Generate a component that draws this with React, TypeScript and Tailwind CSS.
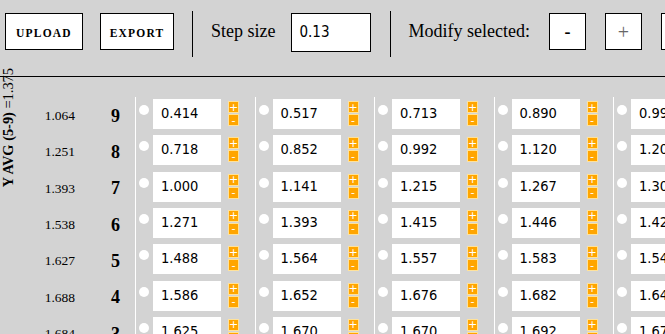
const avgs = ["1.064", "1.251", "1.393", "1.538", "1.627", "1.688", "1.684"];
const rowNums = [9, 8, 7, 6, 5, 4, 3];

const columns = [
  ["0.414", "0.718", "1.000", "1.271", "1.488", "1.586", "1.625"],
  ["0.517", "0.852", "1.141", "1.393", "1.564", "1.652", "1.670"],
  ["0.713", "0.992", "1.215", "1.415", "1.557", "1.676", "1.670"],
  ["0.890", "1.120", "1.267", "1.446", "1.583", "1.682", "1.692"],
  ["0.995", "1.204", "1.302", "1.427", "1.545", "1.648", "1.675"],
];

const serif = "font-['Liberation_Serif',serif]";
const sans = "font-['DejaVu_Sans_Condensed','DejaVu_Sans',sans-serif] [font-stretch:condensed]";

function Cell({ value }: { value: string }) {
  return (
    <div className="flex items-start h-[36.33px] pt-[2px]">
      <div className="ml-[3px] mt-[6px] w-[10px] h-[10px] rounded-full bg-white" />
      <div className={`ml-[4px] w-[68px] h-[30px] bg-white flex items-center pl-[8px] text-[14.5px] text-black ${sans}`}>
        {value}
      </div>
      <div className="ml-[7px] mt-[2px] flex flex-col gap-[1px]">
        <div className="w-[11px] h-[12px] bg-[#ffa500] border border-[#ffe29a] flex items-center justify-center text-white text-[11px] leading-none font-['DejaVu_Sans',sans-serif]">
          +
        </div>
        <div className="w-[11px] h-[12px] bg-[#ffa500] border border-[#ffe29a] flex items-center justify-center text-white text-[11px] leading-none font-['DejaVu_Sans',sans-serif]">
          -
        </div>
      </div>
    </div>
  );
}

export default function App() {
  return (
    <div className={`w-screen h-screen overflow-hidden bg-[#d3d3d3] text-black ${serif}`}>
      {/* Toolbar */}
      <div className="h-[77px] border-b border-black flex items-start pt-[11px] whitespace-nowrap">
        <button className="ml-[5px] mt-[2px] w-[78px] h-[37px] pt-[4px] shrink-0 bg-white border border-black text-[11.5px] font-bold tracking-[1.2px]">
          UPLOAD
        </button>
        <button className="ml-[17px] mt-[2px] w-[74px] h-[37px] pt-[4px] shrink-0 bg-white border border-black text-[11.5px] font-bold tracking-[1.2px]">
          EXPORT
        </button>
        <div className="ml-[18px] w-px h-[46px] shrink-0 bg-black" />
        <span className="ml-[18px] mt-[2px] h-[37px] leading-[37px] text-[18px] shrink-0">Step size</span>
        <div className={`ml-[15px] mt-[2px] w-[80px] h-[39px] shrink-0 bg-white border border-black flex items-center pl-[8px] text-[15px] ${sans}`}>
          0.13
        </div>
        <div className="ml-[19px] w-px h-[46px] shrink-0 bg-black" />
        <span className="ml-[18px] mt-[2px] h-[37px] leading-[37px] text-[18px] shrink-0">Modify selected:</span>
        <button className="ml-[19px] mt-[2px] w-[37px] h-[37px] pt-[2px] shrink-0 bg-white border border-black text-[18px] font-bold">
          -
        </button>
        <button className="ml-[19px] mt-[2px] w-[37px] h-[37px] shrink-0 bg-white border border-black text-[20px] text-[#666]">
          +
        </button>
        <button className="ml-[19px] mt-[2px] w-[37px] h-[37px] shrink-0 bg-white border border-black text-[18px]">
          ×
        </button>
      </div>

      {/* Grid */}
      <div className="flex items-start">
        <div className="w-[16px] shrink-0 flex justify-center mt-[-9px]">
          <div className="[writing-mode:vertical-rl] rotate-180 text-[14.4px] leading-[16px] whitespace-nowrap">
            <span className="font-bold">Y AVG (5-9)</span> =1.375
          </div>
        </div>

        <div className="w-[119px] shrink-0 pt-[20px]">
          {avgs.map((a, i) => (
            <div key={i} className="flex items-center h-[36.33px] pt-[2px]">
              <span className="w-[59px] text-right text-[13.5px]">{a}</span>
              <span className="ml-[36px] text-[18px] font-bold">{rowNums[i]}</span>
            </div>
          ))}
        </div>

        {columns.map((col, ci) => (
          <div key={ci} className="w-[119.5px] shrink-0 mt-[20px] border-l border-white">
            {col.map((v, ri) => (
              <Cell key={ri} value={v} />
            ))}
          </div>
        ))}
      </div>
    </div>
  );
}
